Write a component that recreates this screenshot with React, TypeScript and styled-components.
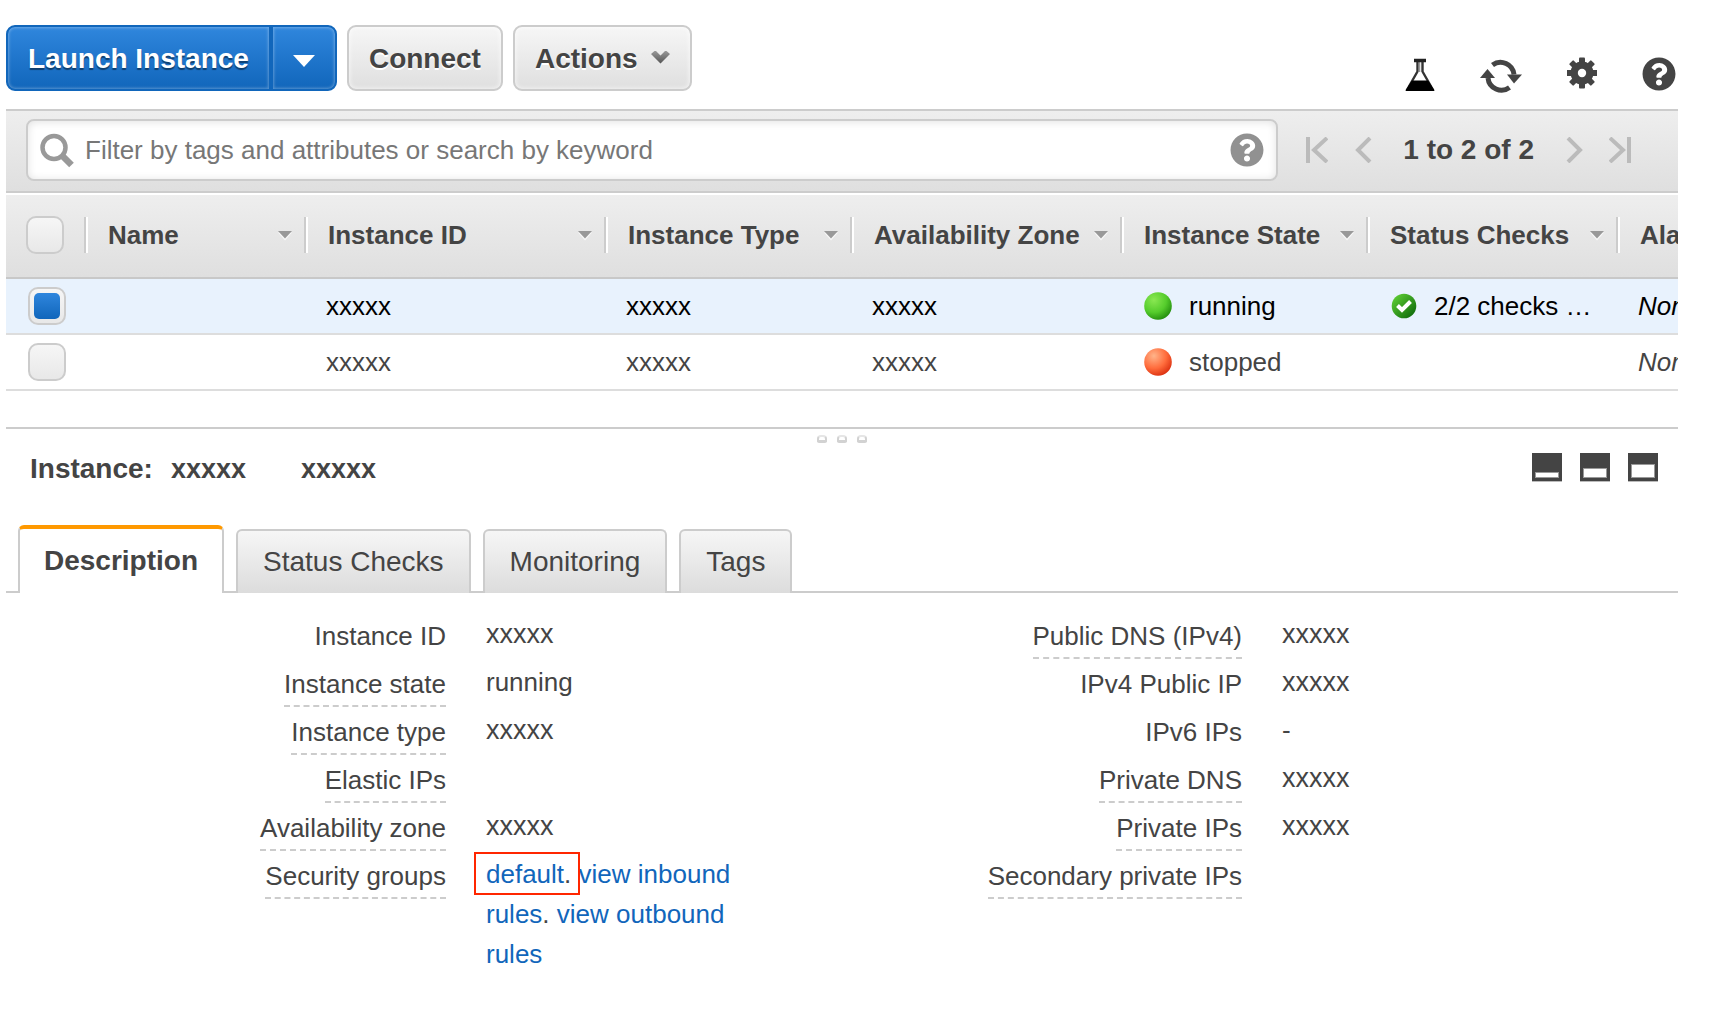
import React, { useState } from "react";
import styled, { createGlobalStyle, css } from "styled-components";
import { FaQuestionCircle } from "react-icons/fa";

const color = {
  text: "#444444",
  border: "#cccccc",
  rowBorder: "#dddddd",
  link: "#1166bb",
  blueTop: "#2f86dd",
  orange: "#ff9900",
  mark: "#ff2600",
};

const GlobalStyle = createGlobalStyle`
  *, *::before, *::after { box-sizing: border-box; }
  body {
    margin: 0;
    background: #ffffff;
    color: ${color.text};
    font: 26px/40px "Liberation Sans", Arial, Helvetica, sans-serif;
  }
  button, input { font: inherit; color: inherit; }
  svg { display: block; flex: none; }
`;

const Page = styled.div`
  padding: 0 42px 0 6px;
`;

/* Toolbar */

const Toolbar = styled.header`
  display: flex;
  align-items: flex-start;
  justify-content: space-between;
  padding: 25px 0 16px;
`;

const ButtonRow = styled.div`
  display: flex;
  gap: 10px;
`;

const SplitButton = styled.div`
  display: flex;
`;

const buttonBase = css`
  display: flex;
  align-items: center;
  justify-content: center;
  height: 66px;
  padding: 2px 20px 0;
  border: 2px solid;
  font-size: 28px;
  font-weight: bold;
  line-height: 40px;
  white-space: nowrap;
  cursor: pointer;
`;

const PlainButton = styled.button`
  ${buttonBase}
  gap: 13px;
  border-color: ${color.border};
  border-radius: 9px;
  background: linear-gradient(#f6f6f6, #dfdfdf);
  box-shadow: inset 0 0 4px 1px rgba(255, 255, 255, 0.6);
  text-shadow: 0 2px 0 #ffffff;
`;

const PrimaryButton = styled.button<{ $side: "left" | "right" }>`
  ${buttonBase}
  border-color: ${color.link};
  border-radius: ${(p) => (p.$side === "left" ? "9px 0 0 9px" : "0 9px 9px 0")};
  background: linear-gradient(${color.blueTop}, ${color.link});
  box-shadow: inset 0 0 3px 1px rgba(255, 255, 255, 0.3);
  color: #ffffff;
  text-shadow: 0 2px 1px rgba(0, 0, 0, 0.45);
`;

const IconRow = styled.div`
  display: flex;
  gap: 45px;
  padding: 32px 2px 0 0;
`;

const IconButton = styled.button`
  display: flex;
  padding: 0;
  border: 0;
  background: none;
  cursor: pointer;
`;

/* Filter bar */

const FilterBar = styled.section`
  display: flex;
  align-items: center;
  padding: 8px 47px 10px 20px;
  border: solid ${color.border};
  border-width: 2px 0;
  background: linear-gradient(#eeeeee, #dfdfdf);
`;

const SearchBox = styled.label`
  display: flex;
  flex: 1;
  align-items: center;
  gap: 11px;
  height: 62px;
  margin-right: 28px;
  padding: 0 12px;
  border: 2px solid ${color.border};
  border-radius: 8px;
  background: #ffffff;
  box-shadow: inset 0 1px 8px rgba(0, 0, 0, 0.12);
`;

const SearchInput = styled.input`
  flex: 1;
  min-width: 0;
  padding: 0;
  border: 0;
  outline: 0;
  background: none;
  &::placeholder {
    color: #777777;
    opacity: 1;
  }
`;

const Pager = styled.nav`
  display: flex;
  align-items: center;
  gap: 25px;
`;

const PagerText = styled.span`
  padding: 0 3px;
  font-size: 28px;
  font-weight: bold;
  white-space: nowrap;
`;

/* Instance table */

const TableFrame = styled.div`
  overflow: hidden;
  border-top: 2px solid #ffffff;
  padding-bottom: 36px;
`;

const Table = styled.table`
  width: 100%;
  table-layout: fixed;
  border-collapse: separate;
  border-spacing: 0;
`;

const Col = styled.col<{ $width?: number }>`
  width: ${(p) => (p.$width ? `${p.$width}px` : "auto")};
`;

const HeadCell = styled.th`
  padding: 0;
  overflow: hidden;
  border-bottom: 2px solid #c8c8c8;
  background: linear-gradient(#eeeeee, #dfdfdf);
  font-weight: bold;
  text-align: left;
  white-space: nowrap;
`;

const HeadInner = styled.div<{ $last?: boolean }>`
  display: flex;
  align-items: center;
  justify-content: space-between;
  height: 82px;
  padding: 0 0 2px 20px;

  &::after {
    content: "";
    display: ${(p) => (p.$last ? "none" : "block")};
    width: 4px;
    height: 36px;
    border-left: 2px solid ${color.border};
    background: #ffffff;
  }
`;

const SortButton = styled.button`
  display: flex;
  flex: 1;
  align-items: center;
  justify-content: space-between;
  padding: 0 12px 0 0;
  border: 0;
  background: none;
  white-space: nowrap;
  cursor: pointer;
`;

const BodyRow = styled.tr<{ $selected: boolean }>`
  background: ${(p) => (p.$selected ? "#e8f2fd" : "#ffffff")};
  color: ${(p) => (p.$selected ? "#000000" : color.text)};
`;

const Cell = styled.td<{ $italic?: boolean }>`
  padding: 0 0 0 18px;
  overflow: hidden;
  border-bottom: 2px solid ${color.rowBorder};
  font-style: ${(p) => (p.$italic ? "italic" : "normal")};
  white-space: nowrap;
`;

const CellInner = styled.div<{ $gap?: number }>`
  display: flex;
  align-items: center;
  gap: ${(p) => p.$gap ?? 0}px;
  height: 54px;
  padding-left: ${(p) => (p.$gap ? 2 : 0)}px;
`;

const CheckCell = styled.div`
  display: flex;
  align-items: center;
  height: 54px;
  padding-left: 4px;
`;

const Checkbox = styled.input`
  display: grid;
  place-items: center;
  width: 38px;
  height: 38px;
  margin: 0;
  appearance: none;
  border: 2px solid ${color.border};
  border-radius: 10px;
  background: linear-gradient(#f6f6f6, #e8e8e8);
  cursor: pointer;

  &:checked::after {
    content: "";
    width: 26px;
    height: 26px;
    border-radius: 5px;
    background: linear-gradient(${color.blueTop}, ${color.link});
  }
`;

/* Detail pane */

const Splitter = styled.div`
  display: flex;
  justify-content: center;
  gap: 10px;
  padding-top: 6px;
  border-top: 2px solid ${color.border};
`;

const Dot = styled.span`
  width: 10px;
  height: 8px;
  border: 2px solid #d2d2d2;
  border-top-color: #e6e6e6;
  border-bottom-width: 3px;
  border-radius: 4px 4px 2px 2px;
`;

const DetailHead = styled.div`
  display: flex;
  align-items: flex-start;
  justify-content: space-between;
  padding: 6px 20px 0 24px;
`;

const Title = styled.h2`
  display: flex;
  margin: 0;
  font-size: 28px;
  line-height: 40px;
`;

const TitleId = styled.span`
  margin-left: 18px;
  font-size: 27px;
  & + & {
    margin-left: 55px;
  }
`;

const LayoutButtons = styled.div`
  display: flex;
  gap: 18px;
  padding-top: 4px;
`;

const TabList = styled.div`
  display: flex;
  align-items: flex-end;
  gap: 12px;
  margin-top: 36px;
  padding-left: 12px;
  box-shadow: inset 0 -2px 0 ${color.border};
`;

const Tab = styled.button<{ $active: boolean }>`
  height: 64px;
  padding: 0 25px;
  border: 2px solid ${color.border};
  border-bottom: 0;
  border-radius: 6px 6px 0 0;
  background: linear-gradient(#f6f6f6, #dcdcdc);
  font-size: 28px;
  line-height: 40px;
  cursor: pointer;

  ${(p) =>
    p.$active &&
    css`
      height: 68px;
      padding: 0 24px;
      border-top: 4px solid ${color.orange};
      background: #ffffff;
      font-weight: bold;
    `}
`;

const Details = styled.div`
  display: grid;
  grid-template-columns: 1fr 1fr;
  padding: 21px 80px 32px 0;
`;

const DetailList = styled.dl`
  display: grid;
  grid-template-columns: minmax(0, 110fr) minmax(0, 79fr);
  grid-auto-rows: minmax(48px, auto);
  align-content: start;
  column-gap: 40px;
  margin: 0;
`;

const Term = styled.dt`
  padding-top: 1px;
  line-height: 42px;
  text-align: right;
  white-space: nowrap;
`;

const TermText = styled.span<{ $hint: boolean }>`
  display: inline-block;
  border-bottom: ${(p) => (p.$hint ? `2px dashed ${color.border}` : "0")};
`;

const Value = styled.dd<{ $masked: boolean }>`
  margin: 0;
  padding-right: 48px;
  font-size: ${(p) => (p.$masked ? 27 : 26)}px;
`;

const Link = styled.a`
  color: ${color.link};
  text-decoration: none;
`;

const Marked = styled.span`
  position: relative;

  &::after {
    content: "";
    position: absolute;
    inset: -7px -9px -6px -12px;
    border: 2px solid ${color.mark};
    pointer-events: none;
  }
`;

/* Icons */

const FlaskIcon = () => (
  <svg width="30" height="36" viewBox="0 0 30 36">
    <path d="M12.500 4V14.500L2.500 32H27.500L17.500 14.500V4" fill="none" stroke="#333" strokeWidth="2.400" />
    <path d="M14.500 5V15" stroke="#999" strokeWidth="1.500" />
    <path d="M9 3.500H21" stroke="#222" strokeWidth="3.500" />
    <path d="M7 24H23L29 33.500H1Z" fill="#000" stroke="#000" strokeLinejoin="round" />
  </svg>
);

const RefreshIcon = () => (
  <svg width="42" height="36" viewBox="0 0 42 36">
    <path d="M12.500 8A13.500 13.500 0 0 1 34 17.500" fill="none" stroke="#444" strokeWidth="5" />
    <path d="M27 17.500H42L34 26.500Z" fill="#444" />
    <path d="M29.500 30.500A13.500 13.500 0 0 1 8 21" fill="none" stroke="#444" strokeWidth="5" />
    <path d="M0 21H15L7.500 12Z" fill="#444" />
  </svg>
);

const GearIcon = () => (
  <svg width="30" height="36" viewBox="0 0 30 36">
    <g fill="#444">
      {[0, 45, 90, 135].map((angle) => (
        <rect key={angle} x="12" y="0.500" width="6" height="31" rx="1" transform={`rotate(${angle} 15 16)`} />
      ))}
      <circle cx="15" cy="16" r="11.500" />
    </g>
    <circle cx="15" cy="16" r="4.200" fill="#fff" />
  </svg>
);

const SearchIcon = () => (
  <svg width="34" height="36" viewBox="0 0 34 36">
    <circle cx="14" cy="15.500" r="11.500" fill="none" stroke="#999" strokeWidth="4.500" />
    <path d="M22.500 24L31.500 33" stroke="#999" strokeWidth="6.500" />
  </svg>
);

const CaretDown = () => (
  <svg width="22" height="18" viewBox="0 0 22 18">
    <path d="M0 5H22L11 17Z" fill="#fff" />
  </svg>
);

const ChevronIcon = () => (
  <svg width="19" height="18" viewBox="0 0 19 18">
    <defs>
      <linearGradient id="chevron" x1="0" y1="0" x2="0" y2="1">
        <stop offset="0" stopColor="#999" />
        <stop offset="1" stopColor="#555" />
      </linearGradient>
    </defs>
    <path d="M0 4L3.500 1H5L9.500 5.500L14 1H15.500L19 4L9.500 13.500Z" fill="url(#chevron)" />
  </svg>
);

const SortIcon = () => (
  <svg width="14" height="12" viewBox="0 0 14 12">
    <path d="M0 3.500L7 11.500L14 3.500Z" fill="#f8f8f8" />
    <path d="M0 2H14L7 9.500Z" fill="#999" />
  </svg>
);

const pagerShapes = {
  first: "M2 0V26M21 1L8 13L21 25",
  previous: "M17 1L5 13L17 25",
  next: "M6 1L18 13L6 25",
  last: "M1 1L14 13L1 25M20 0V26",
};

const PagerIcon = ({ kind }: { kind: keyof typeof pagerShapes }) => (
  <svg width="22" height="26" viewBox="0 0 22 26">
    <path d={pagerShapes[kind]} fill="none" stroke="#bbb" strokeWidth="4" />
  </svg>
);

const StateIcon = ({ state }: { state: string }) => {
  const running = state === "running";
  return (
    <svg width="28" height="28" viewBox="0 0 28 28">
      <defs>
        <radialGradient id={`state-${state}`} cx="0.350" cy="0.280" r="0.750">
          <stop offset="0" stopColor={running ? "#8ae852" : "#ffb48a"} />
          <stop offset="0.600" stopColor={running ? "#55cc2c" : "#ff6c3c"} />
          <stop offset="1" stopColor={running ? "#25900f" : "#dd3312"} />
        </radialGradient>
      </defs>
      <circle cx="14" cy="14" r="13.800" fill={`url(#state-${state})`} />
    </svg>
  );
};

const PassedIcon = () => (
  <svg width="27" height="26" viewBox="0 0 27 26">
    <defs>
      <linearGradient id="passed" x1="0" y1="0" x2="1" y2="1">
        <stop offset="0" stopColor="#66d838" />
        <stop offset="1" stopColor="#066006" />
      </linearGradient>
    </defs>
    <circle cx="14" cy="13" r="12.300" fill="url(#passed)" />
    <path d="M7.500 12.500L12 17L20.500 8.500" fill="none" stroke="#fff" strokeWidth="4" />
  </svg>
);

const PaneIcon = ({ size }: { size: number }) => (
  <svg width="30" height="29" viewBox="0 0 30 29">
    <path d="M0 0H30V28H0Z" fill="#444" />
    <path d="M0 28H30V29H0Z" fill="#bbb" />
    <rect x="3.500" y={24.5 - size} width="23" height={size} fill="#fff" stroke="#999" />
  </svg>
);

/* Data */

const columns = [
  { title: "Name", width: 220 },
  { title: "Instance ID", width: 300 },
  { title: "Instance Type", width: 246 },
  { title: "Availability Zone", width: 270 },
  { title: "Instance State", width: 246 },
  { title: "Status Checks", width: 250 },
];

const instances = [
  { id: "xxxxx", type: "xxxxx", zone: "xxxxx", state: "running", checks: "2/2 checks …", alarm: "None" },
  { id: "xxxxx", type: "xxxxx", zone: "xxxxx", state: "stopped", checks: "", alarm: "None" },
];

const tabs = ["Description", "Status Checks", "Monitoring", "Tags"];

type Detail = { term: string; hint?: boolean; value?: React.ReactNode };

const securityGroups = (
  <>
    <Marked>
      <Link href="#default">default</Link>.
    </Marked>{" "}
    <Link href="#inbound">view inbound rules</Link>. <Link href="#outbound">view outbound rules</Link>
  </>
);

const leftDetails: Detail[] = [
  { term: "Instance ID", value: "xxxxx" },
  { term: "Instance state", hint: true, value: "running" },
  { term: "Instance type", hint: true, value: "xxxxx" },
  { term: "Elastic IPs", hint: true },
  { term: "Availability zone", hint: true, value: "xxxxx" },
  { term: "Security groups", hint: true, value: securityGroups },
];

const rightDetails: Detail[] = [
  { term: "Public DNS (IPv4)", hint: true, value: "xxxxx" },
  { term: "IPv4 Public IP", value: "xxxxx" },
  { term: "IPv6 IPs", value: "-" },
  { term: "Private DNS", hint: true, value: "xxxxx" },
  { term: "Private IPs", hint: true, value: "xxxxx" },
  { term: "Secondary private IPs", hint: true },
];

const DetailColumn = ({ items }: { items: Detail[] }) => (
  <DetailList>
    {items.map((item) => (
      <React.Fragment key={item.term}>
        <Term>
          <TermText $hint={!!item.hint}>{item.term}</TermText>
        </Term>
        <Value $masked={item.value === "xxxxx"}>{item.value}</Value>
      </React.Fragment>
    ))}
  </DetailList>
);

export default function App() {
  const [selected, setSelected] = useState([true, false]);
  const [tab, setTab] = useState(tabs[0]);
  const [query, setQuery] = useState("");

  const toggle = (index: number) => setSelected(selected.map((on, i) => (i === index ? !on : on)));

  return (
    <>
      <GlobalStyle />
      <Page>
        <Toolbar>
          <ButtonRow>
            <SplitButton>
              <PrimaryButton $side="left">Launch Instance</PrimaryButton>
              <PrimaryButton $side="right" aria-label="More launch options">
                <CaretDown />
              </PrimaryButton>
            </SplitButton>
            <PlainButton>Connect</PlainButton>
            <PlainButton>
              Actions
              <ChevronIcon />
            </PlainButton>
          </ButtonRow>
          <IconRow>
            <IconButton aria-label="Experiments"><FlaskIcon /></IconButton>
            <IconButton aria-label="Refresh"><RefreshIcon /></IconButton>
            <IconButton aria-label="Settings"><GearIcon /></IconButton>
            <IconButton aria-label="Help"><FaQuestionCircle size={34} color="#444" /></IconButton>
          </IconRow>
        </Toolbar>

        <FilterBar>
          <SearchBox>
            <SearchIcon />
            <SearchInput
              type="text"
              aria-label="Filter instances"
              placeholder="Filter by tags and attributes or search by keyword"
              value={query}
              onChange={(event) => setQuery(event.target.value)}
            />
            <IconButton type="button" aria-label="Filter help"><FaQuestionCircle size={34} color="#919191" /></IconButton>
          </SearchBox>
          <Pager aria-label="Pages">
            <IconButton aria-label="First page"><PagerIcon kind="first" /></IconButton>
            <IconButton aria-label="Previous page"><PagerIcon kind="previous" /></IconButton>
            <PagerText>1 to 2 of 2</PagerText>
            <IconButton aria-label="Next page"><PagerIcon kind="next" /></IconButton>
            <IconButton aria-label="Last page"><PagerIcon kind="last" /></IconButton>
          </Pager>
        </FilterBar>

        <TableFrame>
          <Table>
            <colgroup>
              <Col $width={82} />
              {columns.map((column) => (
                <Col key={column.title} $width={column.width} />
              ))}
              <Col />
            </colgroup>
            <thead>
              <tr>
                <HeadCell>
                  <HeadInner>
                    <Checkbox
                      type="checkbox"
                      aria-label="Select all"
                      checked={selected.every(Boolean)}
                      onChange={(event) => setSelected(selected.map(() => event.target.checked))}
                    />
                  </HeadInner>
                </HeadCell>
                {columns.map((column) => (
                  <HeadCell key={column.title} scope="col">
                    <HeadInner>
                      <SortButton>
                        {column.title}
                        <SortIcon />
                      </SortButton>
                    </HeadInner>
                  </HeadCell>
                ))}
                <HeadCell scope="col">
                  <HeadInner $last>Alarm Status</HeadInner>
                </HeadCell>
              </tr>
            </thead>
            <tbody>
              {instances.map((instance, index) => (
                <BodyRow key={index} $selected={selected[index]}>
                  <Cell>
                    <CheckCell>
                      <Checkbox
                        type="checkbox"
                        aria-label={`Select instance ${index + 1}`}
                        checked={selected[index]}
                        onChange={() => toggle(index)}
                      />
                    </CheckCell>
                  </Cell>
                  <Cell />
                  <Cell>{instance.id}</Cell>
                  <Cell>{instance.type}</Cell>
                  <Cell>{instance.zone}</Cell>
                  <Cell>
                    <CellInner $gap={17}>
                      <StateIcon state={instance.state} />
                      {instance.state}
                    </CellInner>
                  </Cell>
                  <Cell>
                    {instance.checks && (
                      <CellInner $gap={17}>
                        <PassedIcon />
                        {instance.checks}
                      </CellInner>
                    )}
                  </Cell>
                  <Cell $italic>{instance.alarm}</Cell>
                </BodyRow>
              ))}
            </tbody>
          </Table>
        </TableFrame>

        <Splitter>
          <Dot />
          <Dot />
          <Dot />
        </Splitter>

        <DetailHead>
          <Title>
            Instance:
            <TitleId>xxxxx</TitleId>
            <TitleId>xxxxx</TitleId>
          </Title>
          <LayoutButtons>
            <IconButton aria-label="Small pane"><PaneIcon size={5} /></IconButton>
            <IconButton aria-label="Medium pane"><PaneIcon size={9} /></IconButton>
            <IconButton aria-label="Large pane"><PaneIcon size={13} /></IconButton>
          </LayoutButtons>
        </DetailHead>

        <TabList role="tablist">
          {tabs.map((name) => (
            <Tab key={name} role="tab" aria-selected={name === tab} $active={name === tab} onClick={() => setTab(name)}>
              {name}
            </Tab>
          ))}
        </TabList>

        <Details>
          <DetailColumn items={leftDetails} />
          <DetailColumn items={rightDetails} />
        </Details>
      </Page>
    </>
  );
}
